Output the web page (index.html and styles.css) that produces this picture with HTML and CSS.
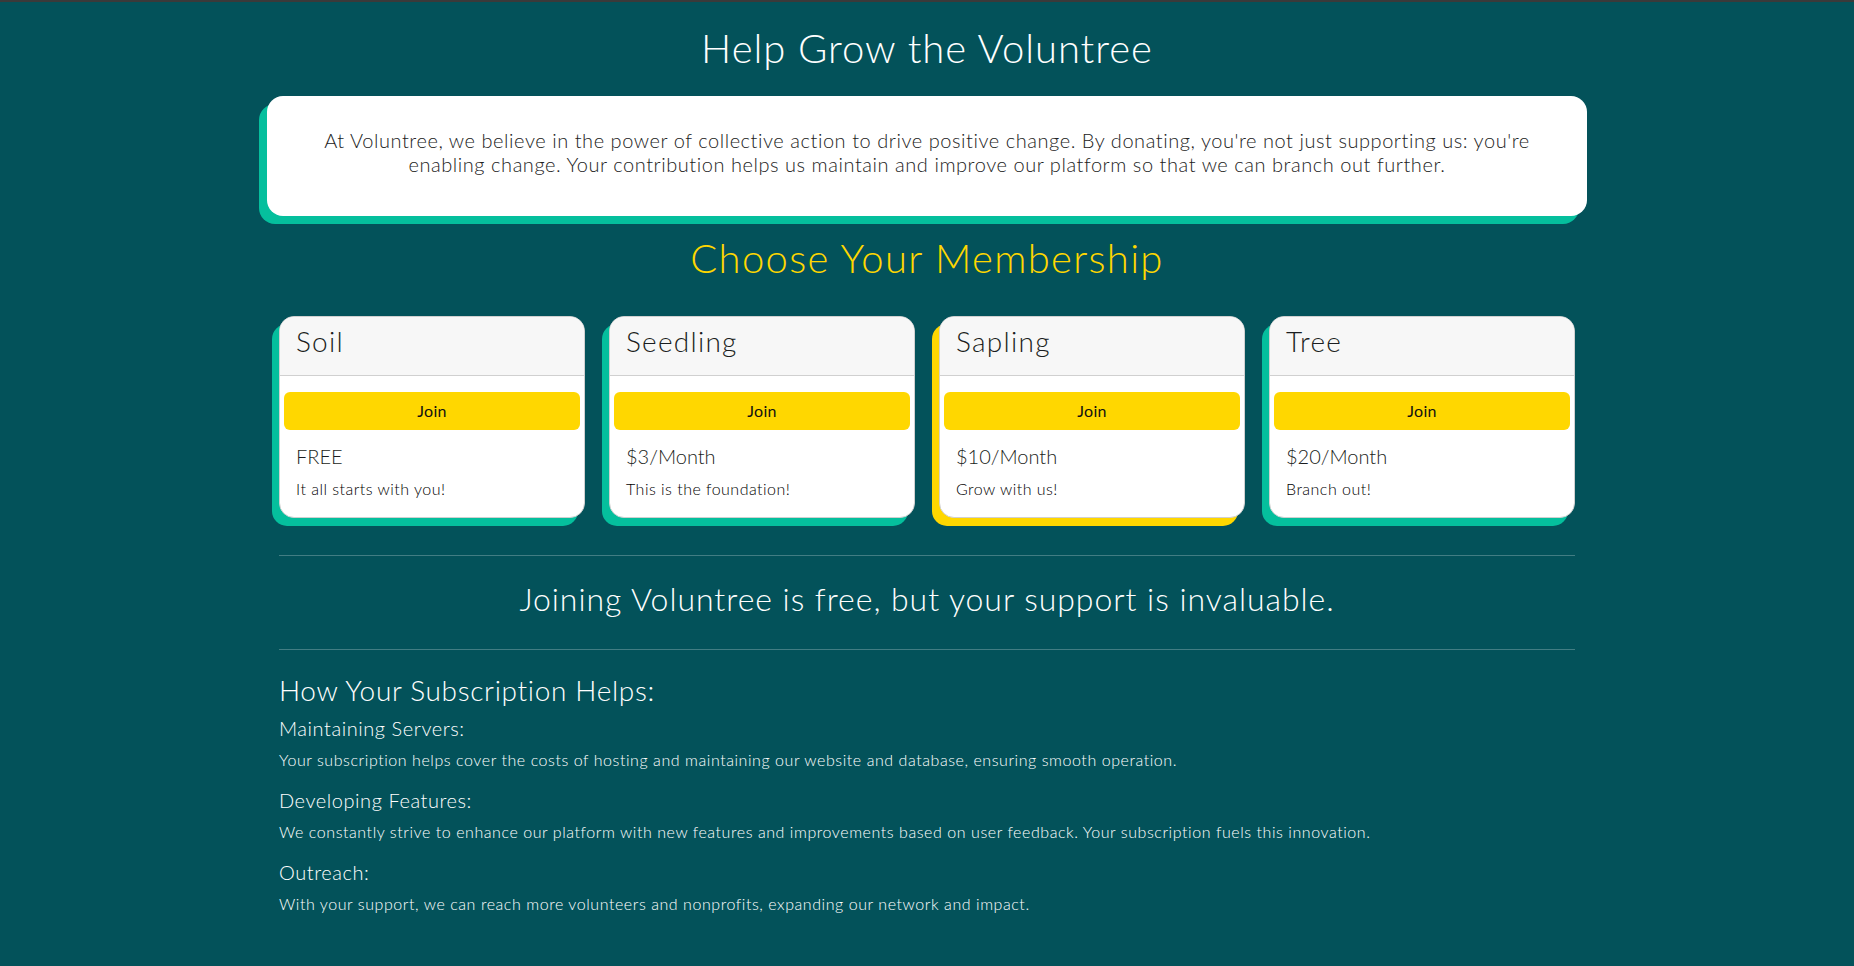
FILE: index.html
```html
<!DOCTYPE html>
<html lang="en">
<head>
<meta charset="utf-8">
<title>Help Grow the Voluntree</title>
<link rel="stylesheet" href="styles.css">
</head>
<body>
<main class="page">
  <h1 class="page-title">Help Grow the Voluntree</h1>
  <section class="intro">
    <p class="intro-text">At Voluntree, we believe in the power of collective action to drive positive change. By donating, you're not just supporting us: you're enabling change. Your contribution helps us maintain and improve our platform so that we can branch out further.</p>
  </section>
  <h1 class="section-title">Choose Your Membership</h1>
  <div class="tiers">
    <div class="tier">
      <div class="tier-head"><h3 class="tier-name">Soil</h3></div>
      <div class="tier-body">
        <button class="join">Join</button>
        <h5 class="price">FREE</h5>
        <p class="tagline">It all starts with you!</p>
      </div>
    </div>
    <div class="tier">
      <div class="tier-head"><h3 class="tier-name">Seedling</h3></div>
      <div class="tier-body">
        <button class="join">Join</button>
        <h5 class="price">$3/Month</h5>
        <p class="tagline">This is the foundation!</p>
      </div>
    </div>
    <div class="tier tier-featured">
      <div class="tier-head"><h3 class="tier-name">Sapling</h3></div>
      <div class="tier-body">
        <button class="join">Join</button>
        <h5 class="price">$10/Month</h5>
        <p class="tagline">Grow with us!</p>
      </div>
    </div>
    <div class="tier">
      <div class="tier-head"><h3 class="tier-name">Tree</h3></div>
      <div class="tier-body">
        <button class="join">Join</button>
        <h5 class="price">$20/Month</h5>
        <p class="tagline">Branch out!</p>
      </div>
    </div>
  </div>
  <hr class="rule rule-first">
  <h2 class="free-note">Joining Voluntree is free, but your support is invaluable.</h2>
  <hr class="rule rule-second">
  <section class="helps">
    <h3 class="helps-title">How Your Subscription Helps:</h3>
    <h5 class="help-head">Maintaining Servers:</h5>
    <p class="help-text">Your subscription helps cover the costs of hosting and maintaining our website and database, ensuring smooth operation.</p>
    <h5 class="help-head">Developing Features:</h5>
    <p class="help-text">We constantly strive to enhance our platform with new features and improvements based on user feedback. Your subscription fuels this innovation.</p>
    <h5 class="help-head">Outreach:</h5>
    <p class="help-text">With your support, we can reach more volunteers and nonprofits, expanding our network and impact.</p>
  </section>
</main>
</body>
</html>
```
FILE: styles.css
```css
* { box-sizing: border-box; }

html, body {
  margin: 0;
  padding: 0;
}

body {
  background: #03525a;
  border-top: 2px solid #3a3a3a;
  font-family: Lato, "Liberation Sans", sans-serif;
  font-weight: 300;
  letter-spacing: 0.035em;
  color: #fff;
  min-height: 966px;
}

.page {
  width: 1320px;
  margin: 0 auto;
  padding-bottom: 40px;
}

.page-title {
  margin: 22px 0 0;
  font-size: 40px;
  line-height: 48px;
  font-weight: 300;
  letter-spacing: 0.024em;
  text-align: center;
  color: #fff;
}

.intro {
  margin-top: 24px;
  background: #fff;
  border-radius: 16px;
  box-shadow: -8px 8px 0 #05bf9d;
  padding: 32px 44px 40px;
  height: 120px;
}

.intro-text {
  margin: 0;
  font-size: 20px;
  line-height: 24px;
  font-weight: 300;
  letter-spacing: 0.0275em;
  color: #222;
  text-align: center;
}

.section-title {
  margin: 18px 0 0;
  font-size: 40px;
  line-height: 48px;
  font-weight: 300;
  letter-spacing: 0.033em;
  text-align: center;
  color: #ffd700;
}

.tiers {
  margin-top: 34px;
  padding: 0 12px;
  display: grid;
  grid-template-columns: repeat(4, 1fr);
  column-gap: 24px;
}

.tier {
  background: #fff;
  border: 1px solid #d0d0d0;
  border-radius: 15px;
  overflow: hidden;
  box-shadow: -7px 8px 0 #05bf9d;
  color: #1a1d20;
}

.tier-featured {
  box-shadow: -7px 8px 0 #ffd700;
}

.tier-head {
  background: #f7f7f7;
  border-bottom: 1px solid #d0d0d0;
  padding: 8px 16px;
}

.tier-name {
  margin: 0 0 8px;
  font-size: 28px;
  line-height: 33.6px;
  font-weight: 300;
  letter-spacing: 0.045em;
}

.tier-body {
  padding: 16px 4px 16px;
}

.join {
  display: block;
  width: 100%;
  height: 38px;
  margin: 0 0 14px;
  border: 0;
  border-radius: 6px;
  background: #ffd700;
  color: #111;
  font-family: inherit;
  font-weight: 400;
  font-size: 16px;
  letter-spacing: 0.02em;
  cursor: pointer;
}

.price {
  margin: 0 0 9px;
  padding: 0 12px;
  font-size: 20px;
  line-height: 24px;
  font-weight: 300;
  letter-spacing: 0;
}

.tagline {
  margin: 0;
  padding: 0 12px;
  font-size: 16px;
  line-height: 24px;
  font-weight: 300;
  letter-spacing: 0.03em;
  color: #000;
}

.rule {
  margin: 0 12px;
  border: 0;
  border-top: 1px solid rgba(255, 255, 255, 0.25);
}

.rule-first { margin-top: 37px; }

.free-note {
  margin: 24px 0 31px;
  font-size: 32px;
  line-height: 38.4px;
  font-weight: 300;
  letter-spacing: 0.03em;
  text-align: center;
}

.helps {
  padding: 0 12px;
  margin-top: 24px;
}

.helps-title {
  margin: 0 0 8px;
  font-size: 28px;
  line-height: 33.6px;
  font-weight: 300;
  letter-spacing: 0.024em;
}

.help-head {
  margin: 0 0 8px;
  font-size: 20px;
  line-height: 24px;
  font-weight: 300;
}

.help-text {
  margin: 0 0 16px;
  font-size: 16px;
  line-height: 24px;
}
```
